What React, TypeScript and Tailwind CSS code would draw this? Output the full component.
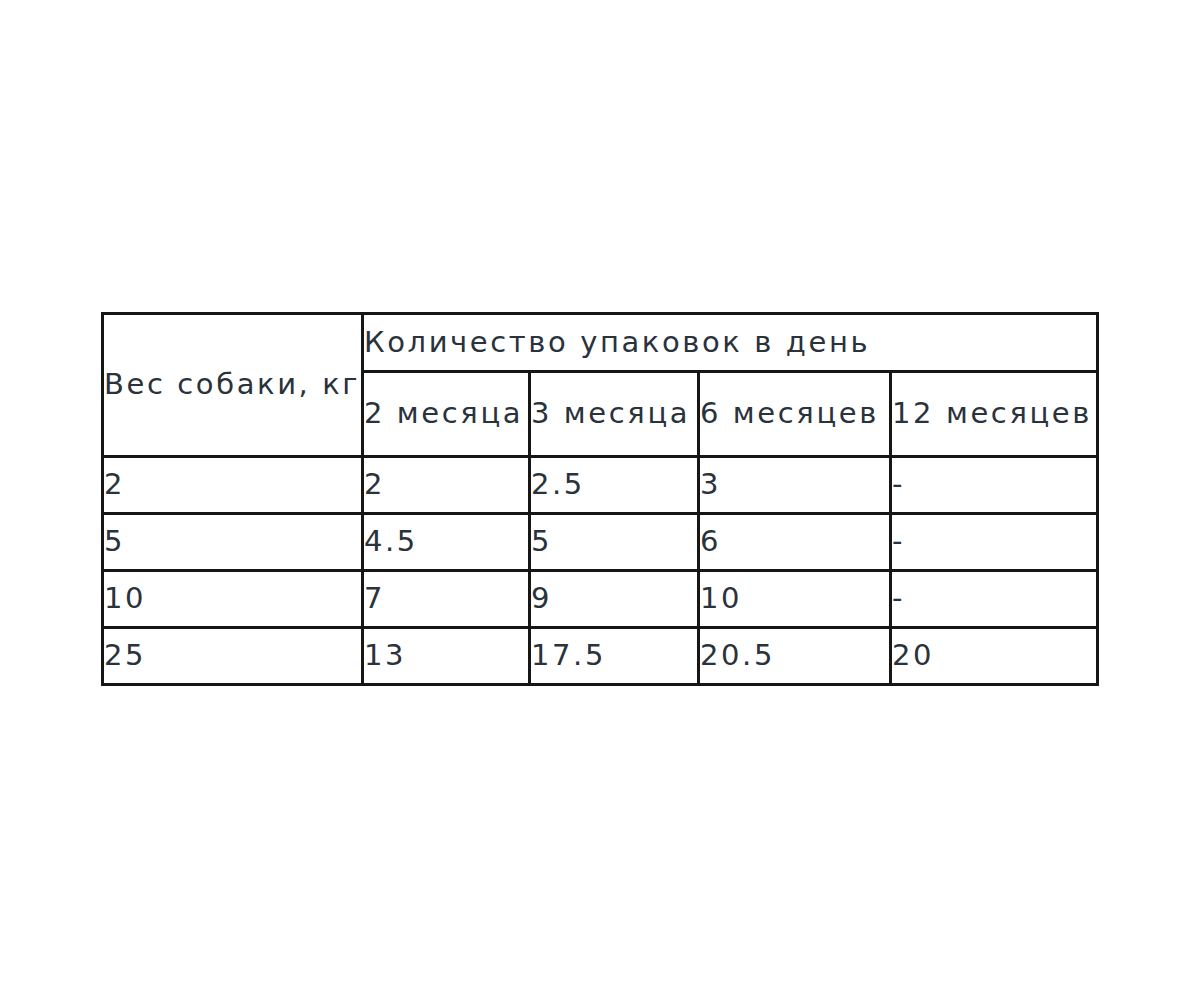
const rows = [
  ["2", "2", "2.5", "3", "-"],
  ["5", "4.5", "5", "6", "-"],
  ["10", "7", "9", "10", "-"],
  ["25", "13", "17.5", "20.5", "20"],
];

const cell = "border-[3px] border-[#161616] p-0 text-left align-middle font-normal whitespace-nowrap";

export default function App() {
  return (
    <div className="min-h-[999px] bg-white pt-[312px] pl-[101px] text-[29px] tracking-[2.6px] text-[#2a323c] [font-family:'DejaVu_Sans',sans-serif]">
      <table className="border-collapse table-fixed w-[995px]">
        <colgroup>
          <col className="w-[260px]" />
          <col className="w-[167px]" />
          <col className="w-[169px]" />
          <col className="w-[192px]" />
          <col className="w-[207px]" />
        </colgroup>
        <thead>
          <tr className="h-[58px]">
            <th rowSpan={2} className={cell}>Вес собаки, кг</th>
            <th colSpan={4} className={cell}>Количество упаковок в день</th>
          </tr>
          <tr className="h-[85px]">
            <th className={cell}>2 месяца</th>
            <th className={cell}>3 месяца</th>
            <th className={cell}>6 месяцев</th>
            <th className={cell}>12 месяцев</th>
          </tr>
        </thead>
        <tbody>
          {rows.map((r, i) => (
            <tr key={i} className="h-[57px]">
              {r.map((v, j) => (
                <td key={j} className={cell}>{v}</td>
              ))}
            </tr>
          ))}
        </tbody>
      </table>
    </div>
  );
}
